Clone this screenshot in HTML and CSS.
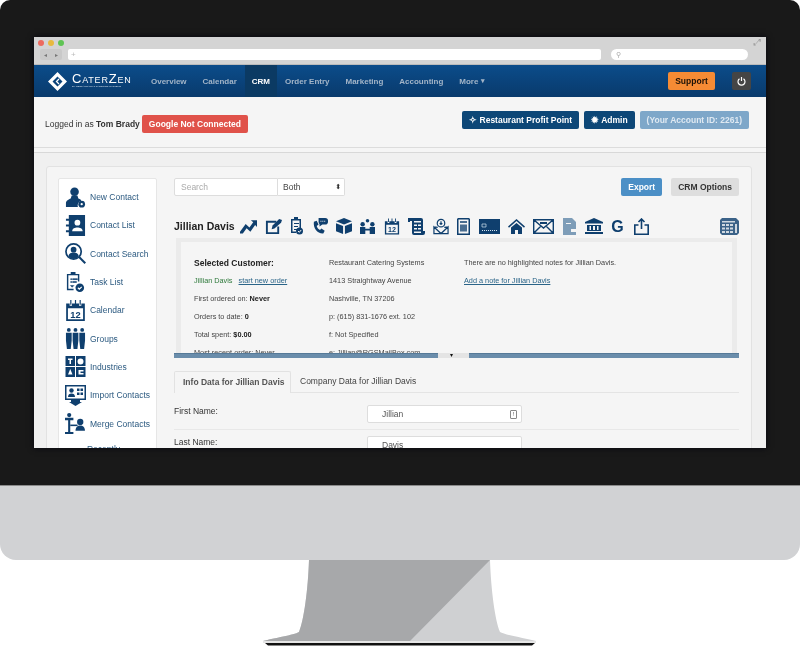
FILE: index.html
```html
<!DOCTYPE html>
<html lang="en">
<head>
    <meta charset="UTF-8">
    <meta name="viewport" content="width=device-width, initial-scale=1.0">
    <title>CaterZen CRM</title>
    <link rel="stylesheet" href="styles.css">
</head>
<body>
    <!-- Icon sprite -->
    <svg class="sprite" xmlns="http://www.w3.org/2000/svg">
        <symbol id="i-chart" viewBox="0 0 18 16"><path d="M0 14 6 6l4 3.500L14 4 11.500 2H18v7l-2-2-5 7-4-3.500L3 16H0z"/></symbol>
        <symbol id="i-note" viewBox="0 0 18 18"><path d="M1 3h11v2H3v10h10V9h2v8H1z"/><path d="M7 12l1-4 7-7 3 1-1 3-7 6z"/></symbol>
        <symbol id="i-doc" viewBox="0 0 13 18"><path d="M1 2h3V0h4v2h3v9h-1.500V3.500h-7v11H6V16H1z"/><path d="M4 6h5v1H4zM4 9h4v1H4zM4 12h3v1H4z"/><circle cx="9.500" cy="14" r="3.500"/><path d="M8 14l1.300 1.300L11.200 13" fill="none" stroke="#f5f5f5"/></symbol>
        <symbol id="i-phone" viewBox="0 0 17 18"><path d="M2 4 5 3l2 4-2 1.500c.5 2 1.800 3.500 3.500 4.300L10 11l3.500 2.500-1.500 3C6 17 1 11 2 4z"/><path d="M7 0h7a3 3 0 0 1 3 3v1a3 3 0 0 1-3 3h-3l-3 2V6.500A3 3 0 0 1 7 4z"/><path d="M9 3h1v1H9zM11 3h1v1h-1zM13 3h1v1h-1z" fill="#f5f5f5"/></symbol>
        <symbol id="i-box" viewBox="0 0 17 17"><path d="M8.500 0 17 3.500 8.500 7 0 3.500z"/><path d="M0 5.500 7.500 8.500V17L0 14zM17 5.500 9.500 8.500V17L17 14z"/></symbol>
        <symbol id="i-people" viewBox="0 0 17 17"><circle cx="8.500" cy="2" r="2"/><circle cx="3" cy="6" r="2.500"/><circle cx="14" cy="6" r="2.500"/><path d="M0 9h6v2h5V9h6v8h-6v-4H6v4H0z"/></symbol>
        <symbol id="i-cal" viewBox="0 0 18 18"><path d="M1 3h3v2h2V3h6v2h2V3h3v15H1zM2.500 7v9.500h13V7z"/><path d="M4.500 0h1v4h-1zM12.500 0h1v4h-1zM8.500 0h1v4h-1z"/><text class="cal-num" x="9" y="15" text-anchor="middle">12</text></symbol>
        <symbol id="i-ledger" viewBox="0 0 17 17"><path d="M0 0h13a2 2 0 0 1 2 2v11h2v2a2 2 0 0 1-2 2H6a2 2 0 0 1-2-2V3H2v1H0z"/><path d="M6 3h7v1.500H6zM6 6.500h3v1.500H6zM10 6.500h3v1.500h-3zM6 10h3v1.500H6zM10 10h3v1.500h-3zM6 13.500h7V15H6z" fill="#f5f5f5"/></symbol>
        <symbol id="i-mailp" viewBox="0 0 17 17"><g fill="none" stroke="currentColor" stroke-width="1.300"><circle cx="8.500" cy="5" r="4"/><path d="M1 9l7.500 7L16 9v7H1zM5 9.500 1 9M12 9.500l4-.5"/><path d="M8.500 3v4M7 5.500h3"/></g></symbol>
        <symbol id="i-calc" viewBox="0 0 13 17"><path d="M1 0h11l1 1v16H0V1zM1.500 1.500v14h10v-14z"/><path d="M3 3h7v2H3zM3 6.500h7v7H3z" opacity=".75"/></symbol>
        <symbol id="i-card" viewBox="0 0 21 15"><path d="M0 0h21v15H0z"/><path d="M3 5h4v3H3z" fill="none" stroke="#cfe0ee" stroke-width=".7"/><path d="M3 11.500h15" stroke="#cfe0ee" stroke-dasharray="1 1"/></symbol>
        <symbol id="i-home" viewBox="0 0 17 15"><path d="M8.500 0 17 7.500l-1 1.200L8.500 2 1 8.700 0 7.500z"/><path d="M3 8.500 8.500 4 14 8.500V15h-4v-4H7v4H3z"/></symbol>
        <symbol id="i-env" viewBox="0 0 21 15"><path d="M.7.700h19.600v13.600H.7zM.7.700 10.500 9l9.800-8.300M.7 14.300 8 7M20.300 14.300 13 7" fill="none" stroke="currentColor" stroke-width="1.400"/><path d="M7 3h7v2H7z"/></symbol>
        <symbol id="i-docs" viewBox="0 0 14 17"><path d="M0 0h9l4 4v13H0z"/><path d="M3 5h5v1H3zM8 11h6v3H8z" fill="#f5f5f5"/></symbol>
        <symbol id="i-bank" viewBox="0 0 18 16"><path d="M9 0 18 4v1.500H0V4z"/><path d="M2 7h14v6H2z"/><path d="M4.500 8h1.500v4H4.500zM8 8h2v4H8zM12 8h1.500v4H12z" fill="#f5f5f5"/><path d="M0 14h18v2H0z"/></symbol>
        <symbol id="i-share" viewBox="0 0 15 17"><path d="M4.500 7H.8v9.200h13.400V7h-3.700M7.500 11V1M4.500 4l3-3 3 3" fill="none" stroke="currentColor" stroke-width="1.600"/></symbol>
        <symbol id="i-table" viewBox="0 0 19 17"><path d="M2 0h14l3 3v12l-2 2H2l-2-2V2z"/><path d="M2 3h13v1.500H2zM2 6h3v2H2zM6 6h3v2H6zM10 6h3v2h-3zM2 9.500h3v2H2zM6 9.500h3v2H6zM10 9.500h3v2h-3zM2 13h3v2H2zM6 13h3v2H6zM10 13h3v2h-3zM15 6h2v9h-2z" fill="#cfd8e0"/></symbol>

        <symbol id="s-newc" viewBox="0 0 22 22"><circle cx="10" cy="5" r="4.500"/><path d="M7 9h6l1 3c2 .5 3 1.500 3 2.500a5 5 0 0 0-3.500 6.500H1v-4c0-3 3-4 5-5z"/><circle cx="17.500" cy="18" r="3.500"/><circle cx="17.500" cy="18" r="1.200" fill="#fff"/></symbol>
        <symbol id="s-list" viewBox="0 0 20 22"><path d="M3 0h17v22H3v-4H0v-2h3v-4H0v-2h3V6H0V4h3z"/><circle cx="12" cy="8" r="3" fill="#fff"/><path d="M6.500 17c0-3 3-4 5.500-4s5.500 1 5.500 4z" fill="#fff"/></symbol>
        <symbol id="s-search" viewBox="0 0 22 22"><circle cx="9" cy="9" r="8" fill="none" stroke="currentColor" stroke-width="1.800"/><circle cx="9" cy="7" r="3"/><path d="M3.500 14c.5-3 3-4 5.500-4s5 1 5.500 4A7 7 0 0 1 3.500 14z"/><path d="M14 15.500 15.500 14l6.500 6.500-1.500 1.500z"/></symbol>
        <symbol id="s-task" viewBox="0 0 20 22"><path d="M1 2h4V0h5v2h4v8h-1.500V3.500h-10v14H8V19H1z"/><path d="M5 7h1v1H5zM7 7h5v1H7zM5 10h1v1H5zM7 10h4v1H7zM4.500 14l2 2 2-2" stroke="currentColor" stroke-width=".6"/><circle cx="14.500" cy="16.500" r="4.500"/><path d="M12.500 16.500l1.500 1.500 2.500-2.500" fill="none" stroke="#fff" stroke-width="1.200"/></symbol>
        <symbol id="s-groups" viewBox="0 0 20 22"><circle cx="3" cy="2" r="2"/><circle cx="10" cy="2" r="2"/><circle cx="17" cy="2" r="2"/><path d="M0 5h6v8l-1 9H1L0 13zM7 5h6v8l-1 9H8l-1-9zM14 5h6v8l-1 9h-4l-1-9z"/></symbol>
        <symbol id="s-ind" viewBox="0 0 20 21"><path d="M0 0h9.500v10H0zM10.500 0H20v10h-9.500zM0 11h9.500v10H0zM10.500 11H20v10h-9.500z"/><path d="M2.500 2.500h4.500v1.500H5.500v4H4V4H2.500zM15 2.500a3 3 0 1 1 0 6 3 3 0 0 1 0-6zM2.500 18.500 4.750 13 7 18.500zM13 14h5v1.500h-3V17h3v1.500h-5z" fill="#fff"/></symbol>
        <symbol id="s-imp" viewBox="0 0 21 21"><path d="M0 0h21v15h-6v2h2l-6.500 4L4 17h2v-2H0zM1.500 1.500v12h18v-12z"/><circle cx="6.500" cy="5.500" r="2.200"/><path d="M3 12c0-2.500 1.500-3.500 3.500-3.500S10 9.500 10 12zM12 3.500h2.500V6H12zM15.500 3.500H18V6h-2.500zM12 7.500h2.500V10H12zM15.500 7.500H18V10h-2.500z"/></symbol>
        <symbol id="s-merge" viewBox="0 0 20 20"><circle cx="4" cy="2" r="2"/><path d="M0 4.500h8V7H5v11h3v2H0v-2h3V7H0z"/><path d="M5 11h7v1.500H5z"/><circle cx="14.500" cy="8.500" r="3"/><path d="M10 17c0-3.500 2-5 4.500-5s4.500 1.500 4.500 5z"/></symbol>
    </svg>

    <div class="monitor">
        <div class="bezel">
            <div class="screen">
                <!-- Browser chrome -->
                <div class="chrome">
                    <div class="chrome-top">
                        <span class="dot dot-red"></span>
                        <span class="dot dot-yellow"></span>
                        <span class="dot dot-green"></span>
                        <span class="chrome-expand">⤢</span>
                    </div>
                    <div class="chrome-bar">
                        <div class="chrome-back"><span>◂</span><span>▸</span></div>
                        <div class="chrome-url">+</div>
                        <div class="chrome-search">⚲</div>
                    </div>
                </div>

                <!-- Navbar -->
                <nav class="navbar">
                    <a href="#" class="brand">
                        <svg class="brand-mark" width="19" height="19" viewBox="0 0 19 19"><path d="M9.500 0 19 9.500 9.500 19 0 9.500zM9.500 4.500 4.500 9.500l5 5 5-5z" fill="#fff"/><path d="M11 7 8.500 9.500 11 12" fill="none" stroke="#fff" stroke-width="1.300"/></svg>
                        <div class="brand-text">
                            <div class="brand-name">CaterZen</div>
                            <div class="brand-sub">BY RESTAURANT &amp; CATERING SYSTEMS</div>
                        </div>
                    </a>
                    <div class="nav-links">
                        <a href="#" class="nav-link">Overview</a>
                        <a href="#" class="nav-link">Calendar</a>
                        <a href="#" class="nav-link active">CRM</a>
                        <a href="#" class="nav-link">Order Entry</a>
                        <a href="#" class="nav-link">Marketing</a>
                        <a href="#" class="nav-link">Accounting</a>
                        <a href="#" class="nav-link">More <span class="caret">▾</span></a>
                    </div>
                    <a href="#" class="support-btn">Support</a>
                    <a href="#" class="power-btn">
                        <svg width="9" height="9" viewBox="0 0 9 9"><path d="M2.500 1.800a3.500 3.500 0 1 0 4 0M4.500 0v4" fill="none" stroke="#fff" stroke-width="1.200"/></svg>
                    </a>
                </nav>

                <!-- Account header -->
                <div class="account-bar">
                    <div class="account-left">
                        <span class="logged">Logged in as <b>Tom Brady</b></span>
                        <a href="#" class="btn btn-red">Google Not Connected</a>
                    </div>
                    <div class="account-right">
                        <a href="#" class="btn btn-navy">✧ Restaurant Profit Point</a>
                        <a href="#" class="btn btn-navy">✹ Admin</a>
                        <a href="#" class="btn btn-pale">(Your Account ID: 2261)</a>
                    </div>
                </div>

                <!-- Main Content -->
                <main class="page">
                    <div class="crm-card">
                        <aside class="side">
                            <a href="#" class="side-item"><svg class="side-ico" width="21" height="21"><use href="#s-newc"/></svg>New Contact</a>
                            <a href="#" class="side-item"><svg class="side-ico" width="21" height="21"><use href="#s-list"/></svg>Contact List</a>
                            <a href="#" class="side-item"><svg class="side-ico" width="21" height="21"><use href="#s-search"/></svg>Contact Search</a>
                            <a href="#" class="side-item"><svg class="side-ico" width="21" height="21"><use href="#s-task"/></svg>Task List</a>
                            <a href="#" class="side-item"><svg class="side-ico" width="21" height="21"><use href="#i-cal"/></svg>Calendar</a>
                            <a href="#" class="side-item"><svg class="side-ico" width="21" height="21"><use href="#s-groups"/></svg>Groups</a>
                            <a href="#" class="side-item"><svg class="side-ico" width="21" height="21"><use href="#s-ind"/></svg>Industries</a>
                            <a href="#" class="side-item"><svg class="side-ico" width="21" height="21"><use href="#s-imp"/></svg>Import Contacts</a>
                            <a href="#" class="side-item"><svg class="side-ico" width="21" height="21"><use href="#s-merge"/></svg>Merge Contacts</a>
                            <a href="#" class="side-item side-recent">Recently</a>
                        </aside>

                        <section class="content">
                            <div class="toolbar">
                                <input class="search" type="text" placeholder="Search">
                                <div class="select">Both<span class="select-arrows">⬍</span></div>
                                <a href="#" class="btn btn-blue">Export</a>
                                <a href="#" class="btn btn-grey">CRM Options</a>
                            </div>

                            <div class="name-row">
                                <h1 class="cust-name">Jillian Davis</h1>
                                <svg width="17" height="16"><use href="#i-chart"/></svg>
                                <svg width="17" height="17"><use href="#i-note"/></svg>
                                <svg width="13" height="18"><use href="#i-doc"/></svg>
                                <svg width="16" height="17"><use href="#i-phone"/></svg>
                                <svg width="16" height="16"><use href="#i-box"/></svg>
                                <svg width="15" height="15"><use href="#i-people"/></svg>
                                <svg width="16" height="17"><use href="#i-cal"/></svg>
                                <svg width="17" height="17"><use href="#i-ledger"/></svg>
                                <svg width="16" height="17"><use href="#i-mailp"/></svg>
                                <svg width="13" height="17"><use href="#i-calc"/></svg>
                                <svg width="21" height="15"><use href="#i-card"/></svg>
                                <svg width="17" height="15"><use href="#i-home"/></svg>
                                <svg width="21" height="15"><use href="#i-env"/></svg>
                                <svg class="ico-pale" width="14" height="17"><use href="#i-docs"/></svg>
                                <svg width="18" height="16"><use href="#i-bank"/></svg>
                                <span class="ico-g">G</span>
                                <svg width="15" height="17"><use href="#i-share"/></svg>
                                <svg class="ico-table" width="19" height="17"><use href="#i-table"/></svg>
                            </div>

                            <div class="summary">
                                <div class="summary-inner">
                                    <div class="summary-col">
                                        <div class="summary-row summary-head">Selected Customer:</div>
                                        <div class="summary-row"><span class="green">Jillian Davis</span><a href="#" class="link link-gap">start new order</a></div>
                                        <div class="summary-row">First ordered on: <b>Never</b></div>
                                        <div class="summary-row">Orders to date: <b>0</b></div>
                                        <div class="summary-row">Total spent: <b>$0.00</b></div>
                                        <div class="summary-row">Most recent order: Never</div>
                                    </div>
                                    <div class="summary-col">
                                        <div class="summary-row">Restaurant Catering Systems</div>
                                        <div class="summary-row">1413 Straightway Avenue</div>
                                        <div class="summary-row">Nashville, TN 37206</div>
                                        <div class="summary-row">p: (615) 831-1676 ext. 102</div>
                                        <div class="summary-row">f: Not Specified</div>
                                        <div class="summary-row">e: Jillian@RGSMailBox.com</div>
                                    </div>
                                    <div class="summary-col">
                                        <div class="summary-row">There are no highlighted notes for Jillian Davis.</div>
                                        <div class="summary-row"><a href="#" class="link">Add a note for Jillian Davis</a></div>
                                    </div>
                                </div>
                            </div>
                            <div class="splitter">
                                <div class="splitter-bar splitter-left"></div>
                                <div class="splitter-handle">▾</div>
                                <div class="splitter-bar"></div>
                            </div>

                            <div class="tabs">
                                <a href="#" class="tab active">Info Data for Jillian Davis</a>
                                <a href="#" class="tab">Company Data for Jillian Davis</a>
                            </div>

                            <div class="form-row">
                                <label class="form-label">First Name:</label>
                                <div class="form-input">Jillian<span class="input-ico">!</span></div>
                            </div>
                            <div class="form-row">
                                <label class="form-label">Last Name:</label>
                                <div class="form-input">Davis</div>
                            </div>
                        </section>
                    </div>
                </main>
            </div>
        </div>
        <div class="chin"></div>
        <svg class="stand" width="800" height="86" viewBox="0 0 800 86">
            <path d="M309 0H490C491 30 495 60 500 72 505 75 525 78 536 81V83H263V81C274 78 294 75 299 72 304 60 308 30 309 0Z" fill="#cfd0d2"/>
            <path d="M309 0H490L410 81H263C274 78 294 75 299 72 304 60 308 30 309 0Z" fill="#a7a8aa"/>
            <path d="M263 81H536V83H263Z" fill="#e6e6e6"/>
            <path d="M265 83H535L532 85.500H268Z" fill="#111"/>
        </svg>
    </div>
</body>
</html>
```

FILE: styles.css
```css
* {
    margin: 0;
    padding: 0;
    box-sizing: border-box;
    font-family: 'Liberation Sans', Arial, sans-serif;
}

:root {
    --navy: #0f3f6e;
    --link: #2c5a80;
    --panel-bg: #f5f5f5;
}

html, body {
    width: 800px;
    height: 646px;
    overflow: hidden;
    background-color: #fff;
}

a {
    text-decoration: none;
}

.sprite {
    display: none;
}

/* Monitor */
.monitor {
    width: 800px;
}

.bezel {
    height: 486px;
    padding: 37px 34px 0;
    background-color: #191919;
    border-radius: 10px 10px 0 0;
    border-bottom: 1px solid #8a8a8a;
}

.screen {
    height: 411px;
    overflow: hidden;
    background-color: #f0f0f0;
    box-shadow: 0 0 6px #05050f;
    filter: blur(0.35px);
}

.chin {
    height: 74px;
    background-color: #d1d2d4;
    border-radius: 0 0 16px 16px;
}

.stand {
    display: block;
}

/* Browser chrome */
.chrome {
    height: 28px;
    background-color: #d4d4d4;
    border-bottom: 1px solid #bbb;
}

.chrome-top {
    display: flex;
    align-items: center;
    gap: 4px;
    height: 11px;
    padding: 0 5px 0 4px;
}

.dot {
    width: 6px;
    height: 6px;
    border-radius: 50%;
}

.dot-red { background-color: #ed6a5e; }
.dot-yellow { background-color: #e8b93f; }
.dot-green { background-color: #5fc454; }

.chrome-expand {
    margin-left: auto;
    font-size: 9px;
    color: #999;
}

.chrome-bar {
    display: flex;
    height: 11px;
    margin-top: 1px;
    padding-left: 6px;
}

.chrome-back {
    display: flex;
    justify-content: space-around;
    align-items: center;
    width: 22px;
    background-color: #c9c9c9;
    border-radius: 2px;
    font-size: 6px;
    color: #777;
}

.chrome-url {
    width: 533px;
    margin-left: 6px;
    padding-left: 3px;
    background-color: #fff;
    border-radius: 2px;
    font-size: 8px;
    line-height: 11px;
    color: #bbb;
}

.chrome-search {
    width: 137px;
    margin-left: 10px;
    padding-left: 5px;
    background-color: #fff;
    border-radius: 6px;
    font-size: 7px;
    line-height: 11px;
    color: #aaa;
}

/* Navbar */
.navbar {
    display: flex;
    align-items: center;
    height: 32px;
    padding-left: 14px;
    background: linear-gradient(#0b4c8a, #093a6c);
}

.brand {
    display: flex;
    align-items: center;
    gap: 5px;
    width: 95px;
}

.brand-name {
    font-size: 13px;
    font-variant: small-caps;
    line-height: 12px;
    letter-spacing: 0.8px;
    color: #fff;
}

.brand-sub {
    font-size: 2.500px;
    line-height: 4px;
    color: #d5e0ea;
    white-space: nowrap;
}

.nav-links {
    display: flex;
    align-items: stretch;
    height: 100%;
}

.nav-link {
    display: flex;
    align-items: center;
    padding: 0 8px;
    font-size: 8px;
    font-weight: bold;
    color: #a3b5c8;
}

.nav-link.active {
    padding: 0 7px;
    background-color: #0b3a63;
    color: #fff;
}

.caret {
    margin-left: 3px;
    font-size: 7px;
}

.support-btn {
    margin-left: auto;
    width: 47px;
    height: 18px;
    background-color: #f58b34;
    border-radius: 2px;
    font-size: 8.500px;
    font-weight: bold;
    line-height: 18px;
    text-align: center;
    color: #1c1208;
}

.power-btn {
    display: flex;
    align-items: center;
    justify-content: center;
    width: 19px;
    height: 18px;
    margin: 0 15px 0 17px;
    background-color: #454545;
    border-radius: 2px;
}

/* Account bar */
.account-bar {
    display: flex;
    justify-content: space-between;
    height: 50px;
    padding: 0 17px 0 11px;
    background-color: var(--panel-bg);
}

.account-left {
    display: flex;
    align-items: center;
    gap: 2px;
    padding-top: 3px;
}

.logged {
    font-size: 8.500px;
    color: #333;
}

.account-right {
    display: flex;
    gap: 5px;
    padding-top: 14px;
}

.btn {
    display: block;
    height: 18px;
    padding: 0 7px;
    border-radius: 2px;
    font-size: 8.500px;
    font-weight: bold;
    line-height: 18px;
    white-space: nowrap;
    color: #fff;
}

.btn-red { background-color: #e0524a; }
.btn-navy { background-color: #0d4777; }
.btn-pale { background-color: #7ea7c9; color: #dfe9f2; }
.btn-blue { background-color: #4b8fc6; margin-left: auto; }
.btn-grey { background-color: #dedede; color: #333; margin-left: 9px; }

/* Page */
.page {
    padding: 18px 14px 0 12px;
    border-top: 1px solid #dcdcdc;
    box-shadow: inset 0 5px 0 -1px #f5f5f5, inset 0 6px 0 -1px #d8d8d8;
}

.crm-card {
    display: flex;
    gap: 17px;
    padding: 11px 12px 0 11px;
    background-color: var(--panel-bg);
    border: 1px solid #e2e2e2;
    border-radius: 3px 3px 0 0;
}

/* Sidebar */
.side {
    flex: none;
    width: 99px;
    padding: 4px 0 0 6px;
    background-color: #fff;
    border: 1px solid #e6e6e6;
    border-radius: 2px;
}

.side-item {
    display: flex;
    align-items: center;
    gap: 4px;
    height: 28.300px;
    font-size: 8.500px;
    color: var(--link);
    white-space: nowrap;
}

.side-ico {
    flex: none;
    color: var(--navy);
    fill: var(--navy);
}

.side-recent {
    height: 22px;
    padding-left: 22px;
}

/* Content */
.content {
    flex: 1;
    min-width: 0;
}

.toolbar {
    display: flex;
    height: 18px;
}

.search {
    width: 104px;
    height: 18px;
    padding-left: 6px;
    background-color: #fff;
    border: 1px solid #ddd;
    border-radius: 2px 0 0 2px;
    font-size: 8.500px;
    outline: none;
}

.search::placeholder {
    color: #aaa;
}

.select {
    display: flex;
    justify-content: space-between;
    align-items: center;
    width: 67px;
    padding: 0 3px 0 5px;
    background-color: #fff;
    border: 1px solid #ddd;
    border-left: none;
    border-radius: 0 2px 2px 0;
    font-size: 8.500px;
    color: #444;
}

.select-arrows {
    font-family: 'DejaVu Sans', sans-serif;
    font-size: 7px;
    color: #333;
}

.name-row {
    display: flex;
    align-items: center;
    gap: 8.300px;
    height: 20px;
    margin-top: 20px;
    color: var(--navy);
    fill: var(--navy);
}

.cust-name {
    width: 60px;
    margin-right: -2.500px;
    font-size: 10.500px;
    font-weight: bold;
    white-space: nowrap;
    color: #222;
}

.cal-num {
    font-size: 8px;
    font-weight: bold;
}

.ico-pale {
    fill: #7e9db8;
}

.ico-g {
    width: 14px;
    font-size: 16px;
    font-weight: bold;
    line-height: 17px;
}

.ico-table {
    margin-left: auto;
    fill: #3b6288;
}

/* Summary */
.summary {
    height: 115px;
    margin: 2px 2px 0;
    padding: 4px 5px 0;
    background-color: #ebebeb;
    overflow: hidden;
}

.summary-inner {
    display: flex;
    height: 111px;
    padding: 12px 0 0 13px;
    background-color: var(--panel-bg);
    overflow: hidden;
}

.summary-col {
    flex: none;
    width: 135px;
}

.summary-row {
    height: 18px;
    font-size: 7.300px;
    line-height: 18px;
    white-space: nowrap;
    color: #444;
}

.summary-row b {
    color: #222;
}

.summary-head {
    font-size: 8.500px;
    font-weight: bold;
    color: #222;
}

.green {
    color: #2f7a3c;
}

.link {
    color: #2a6488;
    text-decoration: underline;
}

.link-gap {
    margin-left: 6px;
}

.splitter {
    display: flex;
    height: 5px;
}

.splitter-bar {
    flex: 1;
    background-color: #6a8dab;
    border-top: 1px solid #567a98;
}

.splitter-left {
    flex: none;
    width: 264px;
}

.splitter-handle {
    width: 31px;
    padding-left: 12px;
    background-color: #e4e4e4;
    font-size: 6px;
    line-height: 5px;
    color: #111;
}

/* Tabs */
.tabs {
    display: flex;
    gap: 9px;
    height: 22px;
    margin: 13px 0 6px;
    border-bottom: 1px solid #e4e4e4;
}

.tab {
    height: 22px;
    font-size: 8.500px;
    line-height: 21px;
    white-space: nowrap;
    color: #444;
}

.tab.active {
    width: 117px;
    padding-left: 8px;
    background-color: var(--panel-bg);
    border: 1px solid #e2e2e2;
    border-bottom: none;
    border-radius: 2px 2px 0 0;
    font-weight: bold;
    color: #555;
}

/* Form rows */
.form-row {
    display: flex;
    height: 31px;
    padding-top: 6px;
    border-bottom: 1px solid #e8e8e8;
}

.form-label {
    flex: none;
    width: 193px;
    font-size: 8.500px;
    line-height: 12px;
    color: #333;
}

.form-input {
    display: flex;
    justify-content: space-between;
    align-items: center;
    width: 155px;
    height: 18px;
    padding: 0 4px 0 14px;
    background-color: #fff;
    border: 1px solid #ddd;
    border-radius: 2px;
    font-size: 8.500px;
    color: #555;
}

.input-ico {
    width: 7px;
    height: 9px;
    border: 1px solid #888;
    border-radius: 1px;
    font-size: 6px;
    line-height: 7px;
    text-align: center;
}
```
